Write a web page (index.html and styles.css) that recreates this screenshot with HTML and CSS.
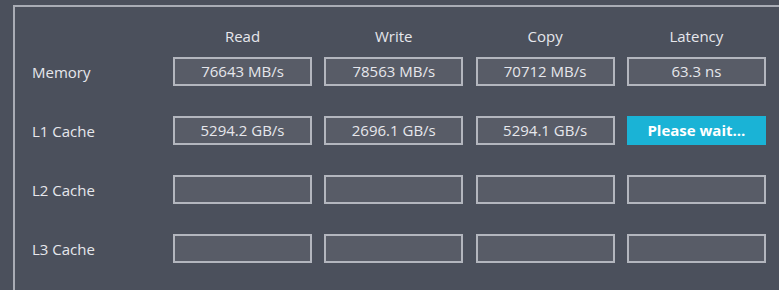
FILE: index.html
```html
<!DOCTYPE html>
<html>
<head>
<meta charset="utf-8">
<link rel="stylesheet" href="styles.css">
</head>
<body>
<div class="panel">
  <div class="grid head">
    <div></div>
    <div class="col-title">Read</div>
    <div class="col-title">Write</div>
    <div class="col-title">Copy</div>
    <div class="col-title">Latency</div>
  </div>
  <div class="rows">
    <div class="grid row">
      <div class="label">Memory</div>
      <div class="cell">76643 MB/s</div>
      <div class="cell">78563 MB/s</div>
      <div class="cell">70712 MB/s</div>
      <div class="cell">63.3 ns</div>
    </div>
    <div class="grid row">
      <div class="label">L1 Cache</div>
      <div class="cell">5294.2 GB/s</div>
      <div class="cell">2696.1 GB/s</div>
      <div class="cell">5294.1 GB/s</div>
      <div class="cell busy">Please wait...</div>
    </div>
    <div class="grid row">
      <div class="label">L2 Cache</div>
      <div class="cell"></div>
      <div class="cell"></div>
      <div class="cell"></div>
      <div class="cell"></div>
    </div>
    <div class="grid row">
      <div class="label">L3 Cache</div>
      <div class="cell"></div>
      <div class="cell"></div>
      <div class="cell"></div>
      <div class="cell"></div>
    </div>
  </div>
</div>
</body>
</html>
```
FILE: styles.css
```css
html, body {
  margin: 0;
  padding: 0;
  background: #4b505c;
  overflow: hidden;
  height: 290px;
}
body {
  font-family: "Open Sans", "Noto Sans", sans-serif;
  color: #e6e7ec;
}
.panel {
  margin: 5px 0 0 13px;
  width: 766px;
  height: 285px;
  border-top: 2px solid #a9acb5;
  border-left: 2px solid #a9acb5;
  padding-top: 19px;
  box-sizing: border-box;
  overflow: hidden;
}
.grid {
  display: grid;
  grid-template-columns: 145.7px 139px 139px 139px 139px;
  column-gap: 12.3px;
}
.head {
  height: 20px;
  margin-bottom: 11px;
}
.col-title {
  text-align: center;
  font-size: 15px;
  line-height: 20px;
}
.rows {
  display: flex;
  flex-direction: column;
  gap: 30px;
}
.row {
  height: 29px;
  align-items: center;
}
.label {
  padding-left: 17px;
  font-size: 15px;
  line-height: 20px;
}
.cell {
  height: 29px;
  box-sizing: border-box;
  border: 2px solid #b3b6be;
  background: #585c67;
  text-align: center;
  font-size: 15px;
  line-height: 25px;
}
.cell.busy {
  background: #1ab3d6;
  border-color: #1ab3d6;
  color: #ffffff;
  font-weight: 700;
}
```
